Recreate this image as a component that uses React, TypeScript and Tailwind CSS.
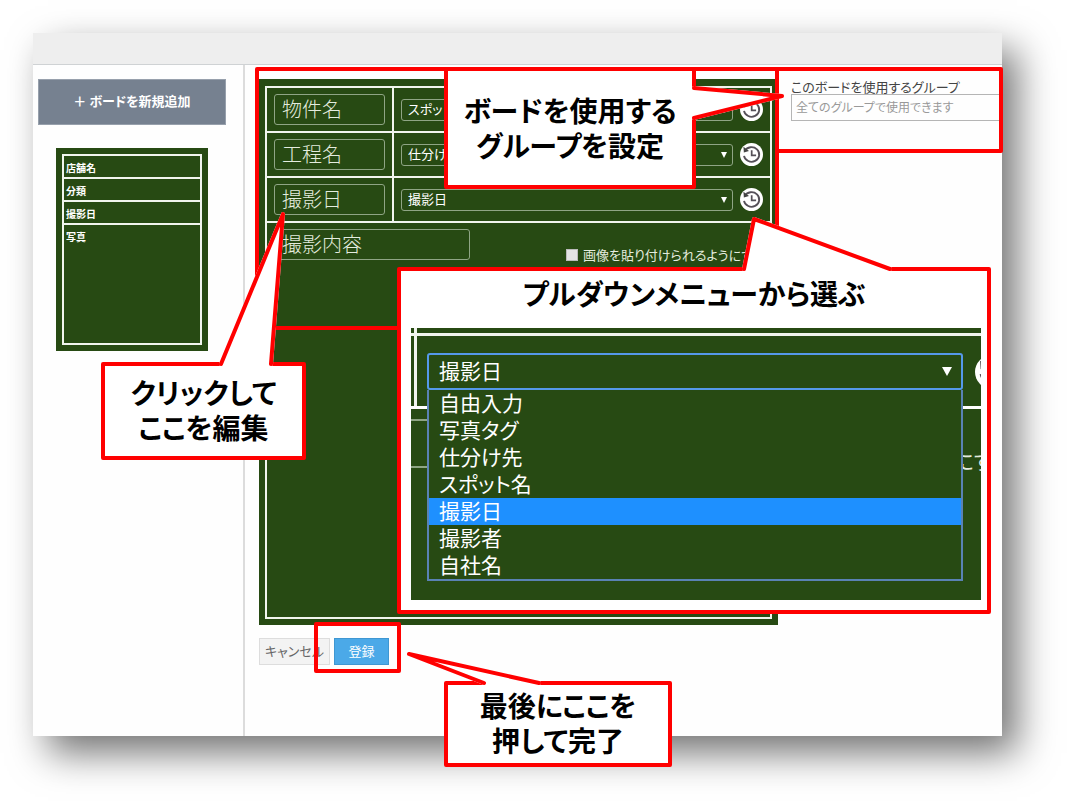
import React from "react";

const boardRows = [
  { label: "物件名", value: "スポット名" },
  { label: "工程名", value: "仕分け先" },
  { label: "撮影日", value: "撮影日" },
];

const options = ["自由入力", "写真タグ", "仕分け先", "スポット名", "撮影日", "撮影者", "自社名"];

function HistoryIcon({ className }: { className: string }) {
  return (
    <svg viewBox="0 0 24 24" className={className} aria-hidden="true">
      <circle cx="12" cy="12" r="12" fill="#fff" />
      <path d="M5 8.4A8 7.6 0 1 1 4.2 13.4" fill="none" stroke="#555058" strokeWidth="1.9" />
      <path d="M3.6 4 L4 10 L9.4 8.4 Z" fill="#444" />
      <path d="M12.2 7.6v5.4h4.6" fill="none" stroke="#555058" strokeWidth="1.8" />
    </svg>
  );
}

function TopBar() {
  return <header className="h-8 border-b border-[#cfd2d4] bg-[#eeeeee]" />;
}

function Sidebar() {
  return (
    <aside className="w-53 shrink-0 border-r-2 border-[#dcdcdc] pt-3.5 pl-[5px] pr-[17px]">
      <button className="h-[46px] w-full border border-[#97a0ac] bg-[#768190] pb-0.5 text-[13px] font-bold text-white">
        ＋ ボードを新規追加
      </button>
      <div className="mx-[18px] mt-[23px] h-[203px] bg-[#274a13] p-[6px]">
        <ul className="h-full border-2 border-[#f1f5ee] text-[10px] font-bold text-white">
          {["店舗名", "分類", "撮影日"].map((t) => (
            <li key={t} className="flex h-[23px] items-center border-b-2 border-[#f1f5ee] pt-0.5 pl-0.5">
              {t}
            </li>
          ))}
          <li className="flex h-[23px] items-center pl-0.5">写真</li>
        </ul>
      </div>
    </aside>
  );
}

function Board() {
  const field =
    "h-[31px] rounded-[3px] border border-[#8fa585] bg-transparent px-[7px] pb-0.5 text-[20px] leading-[28px] font-light text-[#e4ecdf]";
  return (
    <form className="flex min-h-[546px] flex-col bg-[#274a13] p-[6px] pt-[7px]">
      <div className="flex flex-1 flex-col border-2 border-[#f1f5ee]">
        {boardRows.map((r) => (
          <div key={r.label} className="flex h-[45px] border-b-2 border-[#f1f5ee]">
            <div className="flex w-[127px] items-center border-r-2 border-[#f1f5ee] px-[7px]">
              <input aria-label={r.label} defaultValue={r.label} className={field + " w-full"} />
            </div>
            <div className="flex flex-1 items-center gap-[7px] px-[7px]">
              <div className="grid flex-1 items-center">
                <select
                  aria-label={r.label + "の値"}
                  className="col-start-1 row-start-1 block h-[22px] w-full appearance-none rounded-[3px] border border-[#8fa585] bg-[#274a13] px-1.5 pb-0.5 text-[13px] leading-[18px] text-white"
                >
                  <option>{r.value}</option>
                </select>
                <span className="pointer-events-none col-start-1 row-start-1 mr-1.5 justify-self-end border-x-[3px] border-t-[6px] border-x-transparent border-t-white" />
              </div>
              <button type="button" aria-label="履歴" className="size-[23px]">
                <HistoryIcon className="size-full" />
              </button>
            </div>
          </div>
        ))}
        <div className="flex flex-1 items-start px-[7px] pt-[6px]">
          <input aria-label="撮影内容" defaultValue="撮影内容" className={field + " w-[196px]"} />
          <label className="mt-[18px] ml-24 flex items-center gap-[5px] text-[13px] leading-[15px] whitespace-nowrap text-[#e4ecdf]">
            <input type="checkbox" className="size-[12px] appearance-none border border-[#bbb] bg-[#e4e4e4]" />
            画像を貼り付けられるようにする
          </label>
        </div>
      </div>
    </form>
  );
}

function GroupPanel() {
  return (
    <div className="min-w-0 flex-1 pl-[13px]">
      <label htmlFor="group" className="block text-[13px] leading-[15px] whitespace-nowrap text-[#444]">
        このボードを使用するグループ
      </label>
      <input
        id="group"
        placeholder="全てのグループで使用できます"
        className="block h-[27px] w-full border border-r-0 border-[#b5b5b5] px-1 pb-0.5 text-[12px] placeholder:text-[#999999]"
      />
    </div>
  );
}

function Callout({ className, children }: { className: string; children: React.ReactNode }) {
  return (
    <div
      className={
        "absolute rounded-[2px] border-4 border-[#ff0000] bg-white text-center text-[28px] leading-[35px] font-bold text-black " +
        className
      }
    >
      {children}
    </div>
  );
}

function Tail({ className, viewBox, points }: { className: string; viewBox: string; points: string }) {
  return (
    <svg className={"absolute " + className} viewBox={viewBox} aria-hidden="true">
      <polygon points={points} fill="#fff" stroke="#fff" strokeWidth="4" strokeLinejoin="round" />
      <polyline points={points} fill="none" stroke="#ff0000" strokeWidth="4" strokeLinejoin="round" strokeLinecap="round" />
    </svg>
  );
}

function PulldownDetail() {
  return (
    <div className="relative mt-[17px] mr-[6px] ml-[10px] h-[272px] overflow-hidden bg-[#274a13] text-left text-[21px] font-normal text-white">
      <span className="absolute inset-x-0 top-[5px] h-[3px] bg-[#f1f5ee]" />
      <span className="absolute top-0 left-[3px] h-[78px] w-[3px] bg-[#f1f5ee]" />
      <span className="absolute inset-x-0 top-[78px] h-[3px] bg-white" />
      <span className="absolute top-[91px] left-0 h-[49px] w-10 border-y-2 border-[#8fa585]" />
      <span className="absolute top-[115px] right-[-12px] leading-[35px] text-[#e4ecdf]">にす</span>
      <HistoryIcon className="absolute top-[27px] right-[-28px] size-[34px]" />
      <div className="relative mr-[18px] ml-[16px] pt-[25px]">
        <div className="grid items-center">
          <select
            aria-label="項目"
            defaultValue="撮影日"
            className="col-start-1 row-start-1 block h-[37px] w-full appearance-none rounded-[3px] border-2 border-[#5599ea] bg-[#274a13] px-[10px] pb-1 leading-[30px]"
          >
            {options.map((o) => (
              <option key={o}>{o}</option>
            ))}
          </select>
          <span className="pointer-events-none col-start-1 row-start-1 mr-[11px] justify-self-end border-x-[5px] border-t-[9px] border-x-transparent border-t-white" />
        </div>
        <ul role="listbox" aria-label="項目の候補" className="border-2 border-t-0 border-[#5a82b4] bg-[#274a13]">
          {options.map((o) => (
            <li
              key={o}
              role="option"
              aria-selected={o === "撮影日"}
              className={"h-[27px] px-[10px] leading-[24px] " + (o === "撮影日" ? "bg-[#1e90ff]" : "")}
            >
              {o}
            </li>
          ))}
        </ul>
      </div>
    </div>
  );
}

export default function App() {
  return (
    <div
      lang="ja"
      className="relative min-h-screen overflow-hidden bg-white pt-[33px] pr-[65px] pb-[65px] pl-[33px] font-['Noto_Sans_CJK_JP',sans-serif] [font-feature-settings:'palt']"
    >
      <div className="bg-[#fefefe] shadow-[15px_17px_36px_rgba(0,0,0,0.55)]">
        <TopBar />
        <div className="flex min-h-[671px]">
          <Sidebar />
          <main className="flex min-w-0 flex-1 items-start pt-3.5 pl-[14px]">
            <div className="w-[519px] shrink-0">
              <Board />
              <div className="mt-[13px] flex gap-1 text-[13px]">
                <button className="h-[27px] w-[71px] border border-[#dddddd] bg-[#f3f3f3] pb-0.5 text-[#666]">
                  キャンセル
                </button>
                <button className="h-[27px] w-[55px] border border-[#3f97d2] bg-[#4ba9e8] pb-0.5 text-white">登録</button>
              </div>
            </div>
            <GroupPanel />
          </main>
        </div>
      </div>

      <div className="absolute top-[67px] left-[255px] h-[263px] w-[524px] rounded-[2px] border-4 border-[#ff0000]" />
      <div className="absolute top-[67px] left-[775px] h-[86px] w-[228px] rounded-[2px] border-4 border-[#ff0000]" />
      <div className="absolute top-[622px] left-[314px] h-[51px] w-[87px] rounded-[2px] border-4 border-[#ff0000]" />

      <Callout className="top-[67px] left-[444px] h-[122px] w-[252px] pt-[22px]">
        ボードを使用する
        <br />
        グループを設定
      </Callout>
      <Tail className="top-[80px] left-[690px] h-[46px] w-[100px]" viewBox="690 80 100 46" points="694,88 782,96 694,118" />

      <Callout className="top-[362px] left-[101px] h-[98px] w-[205px] pt-[9px]">
        クリックして
        <br />
        ここを編集
      </Callout>
      <Tail className="top-[205px] left-[210px] h-[165px] w-[80px]" viewBox="210 205 80 165" points="221,364 283,214 271,364" />

      <Callout className="top-[267px] left-[397px] h-[347px] w-[594px] pt-[5px]">
        プルダウンメニューから選ぶ
        <PulldownDetail />
      </Callout>
      <Tail className="top-[210px] left-[735px] h-[65px] w-[165px]" viewBox="735 210 165 65" points="744,269 754,219 890,269" />

      <Callout className="top-[681px] left-[444px] h-[86px] w-[228px] pt-[3px]">
        最後にここを
        <br />
        押して完了
      </Callout>
      <Tail className="top-[645px] left-[400px] h-[45px] w-[150px]" viewBox="400 645 150 45" points="484,683 409,654 539,683" />
    </div>
  );
}
